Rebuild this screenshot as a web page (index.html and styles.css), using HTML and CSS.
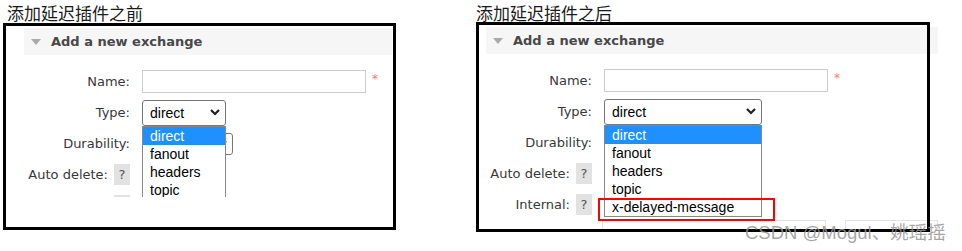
FILE: index.html
```html
<!DOCTYPE html>
<html lang="zh-CN">
<head>
  <meta charset="UTF-8">
  <title>延迟插件对比</title>
  <link rel="stylesheet" href="styles.css">
</head>
<body>

  <div class="page">

    <!-- Before the plugin -->
    <div class="panel panel-before">
      <div class="caption">添加延迟插件之前</div>
      <div class="frame">
        <div class="shot">
          <div class="section-head">
            <svg class="toggle" width="10" height="6" viewBox="0 0 10 6"><polygon points="0,0 10,0 5,6" fill="#aaa"/></svg>
            <h2>Add a new exchange</h2>
          </div>
          <div class="form">
            <div class="row">
              <div class="label">Name:</div>
              <div class="value"><div class="input"></div><span class="req">*</span></div>
            </div>
            <div class="row">
              <div class="label">Type:</div>
              <div class="value">
                <div class="select type-before">
                  <span>direct</span>
                  <svg width="10" height="7" viewBox="0 0 10 7"><polyline points="1,1 5,5 9,1" fill="none" stroke="#222" stroke-width="2.2"/></svg>
                  <div class="dropdown">
                    <div class="option active">direct</div>
                    <div class="option">fanout</div>
                    <div class="option">headers</div>
                    <div class="option">topic</div>
                  </div>
                </div>
              </div>
            </div>
            <div class="row">
              <div class="label">Durability:</div>
              <div class="value">
                <div class="select small">
                  <span></span>
                  <svg width="10" height="7" viewBox="0 0 10 7"><polyline points="1,1 5,5 9,1" fill="none" stroke="#222" stroke-width="2.2"/></svg>
                </div>
              </div>
            </div>
            <div class="row">
              <div class="label">Auto delete: <span class="help">?</span></div>
              <div class="value"></div>
            </div>
            <!-- next row is cut by the screenshot edge -->
            <div class="row">
              <div class="label"><span class="help"></span></div>
              <div class="value"></div>
            </div>
          </div>
        </div>
      </div>
    </div>

    <!-- After the plugin -->
    <div class="panel panel-after">
      <div class="caption">添加延迟插件之后</div>
      <div class="frame">
        <div class="shot">
          <div class="section-head">
            <svg class="toggle" width="10" height="6" viewBox="0 0 10 6"><polygon points="0,0 10,0 5,6" fill="#aaa"/></svg>
            <h2>Add a new exchange</h2>
          </div>
          <div class="form">
            <div class="row">
              <div class="label">Name:</div>
              <div class="value"><div class="input"></div><span class="req">*</span></div>
            </div>
            <div class="row">
              <div class="label">Type:</div>
              <div class="value">
                <div class="select type-after">
                  <span>direct</span>
                  <svg width="10" height="7" viewBox="0 0 10 7"><polyline points="1,1 5,5 9,1" fill="none" stroke="#222" stroke-width="2.2"/></svg>
                  <div class="dropdown">
                    <div class="option active">direct</div>
                    <div class="option">fanout</div>
                    <div class="option">headers</div>
                    <div class="option">topic</div>
                    <div class="option marked">x-delayed-message</div>
                  </div>
                </div>
              </div>
            </div>
            <div class="row">
              <div class="label">Durability:</div>
              <div class="value">
                <div class="select small">
                  <span></span>
                  <svg width="10" height="7" viewBox="0 0 10 7"><polyline points="1,1 5,5 9,1" fill="none" stroke="#222" stroke-width="2.2"/></svg>
                </div>
              </div>
            </div>
            <div class="row">
              <div class="label">Auto delete: <span class="help">?</span></div>
              <div class="value"></div>
            </div>
            <div class="row">
              <div class="label">Internal: <span class="help">?</span></div>
              <div class="value"></div>
            </div>
            <div class="row row-top">
              <div class="label"></div>
              <div class="value"><div class="input faint"></div><div class="input faint short"></div></div>
            </div>
          </div>
        </div>
      </div>
      <div class="watermark">CSDN @Mogul、姚瑶摇</div>
    </div>

  </div>

</body>
</html>
```

FILE: styles.css
```css
* {
  box-sizing: border-box;
  margin: 0;
  padding: 0;
}

html,
body {
  height: 100%;
}

body {
  min-height: 251px;
  background-color: #fff;
  font-family: "DejaVu Sans", Verdana, sans-serif;
  font-size: 13px;
  color: #383838;
}

.page {
  display: flex;
  gap: 80px;
  padding-left: 3px;
}

.panel {
  position: relative;
}

/* Chinese titles above each picture */
.caption {
  height: 22px;
  padding-top: 3px;
  line-height: 19px;
  font-family: "Noto Sans CJK SC", "Microsoft YaHei", sans-serif;
  font-size: 17px;
  color: #1a1a1a;
}

.panel-before .caption {
  padding-left: 4px;
}

/* Black frame drawn on top of the pasted screenshot */
.frame {
  position: relative;
  padding: 5px 0 0 21px;
}

.frame::after {
  content: "";
  position: absolute;
  top: 0;
  left: 0;
  right: 0;
  bottom: 0;
  border: 3px solid #000;
  pointer-events: none;
}

.panel-before .frame {
  width: 393px;
  height: 207px;
  margin-top: 1px;
}

.panel-after .frame {
  width: 454px;
  height: 210px;
  padding-left: 10px;
}

.shot {
  overflow: hidden;
  background-color: #fff;
}

.panel-before .shot {
  width: 368px;
  height: 169px;
}

.panel-after .shot {
  width: 452px;
  height: 202px;
}

/* Section header */
.section-head {
  display: flex;
  align-items: center;
  gap: 10px;
  height: 27px;
  padding-left: 7px;
  background-color: #f6f6f6;
}

.section-head h2 {
  font-size: 13px;
  font-weight: bold;
  color: #484848;
}

/* Form rows */
.form {
  padding-top: 11px;
}

.row {
  display: flex;
  align-items: center;
  height: 31px;
}

.row-top {
  align-items: flex-start;
}

.label {
  width: 106px;
  display: flex;
  justify-content: flex-end;
  align-items: center;
  gap: 6px;
  white-space: nowrap;
}

.value {
  display: flex;
  align-items: center;
  margin-left: 12px;
}

.row-top .value {
  gap: 19px;
}

.input {
  width: 224px;
  height: 23px;
  border: 1px solid #ccc;
  background-color: #fff;
}

.input.faint {
  border-color: #e2e2e2;
}

.input.short {
  width: 93px;
}

.req {
  margin-left: 6px;
  margin-top: -6px;
  font-size: 12px;
  color: #f77;
}

.help {
  display: inline-block;
  width: 16px;
  height: 21px;
  line-height: 21px;
  text-align: center;
  background-color: #e2e2e2;
  color: #555;
  font-size: 13px;
}

/* Select boxes */
.select {
  position: relative;
  display: flex;
  align-items: center;
  justify-content: space-between;
  height: 26px;
  padding: 0 5px 0 7px;
  border: 1px solid #767676;
  border-radius: 3px;
  background-color: #fff;
  font-family: "Liberation Sans", Arial, sans-serif;
  font-size: 14px;
  color: #000;
}

.select.type-before {
  width: 84px;
}

.select.type-after {
  width: 158px;
}

.select.small {
  width: 91px;
  height: 22px;
}

/* Open options list */
.dropdown {
  position: absolute;
  top: calc(100% + 1px);
  left: -1px;
  right: -1px;
  z-index: 2;
  border: 1px solid #888;
  background-color: #fff;
}

.option {
  height: 18px;
  line-height: 18px;
  padding-left: 7px;
  white-space: nowrap;
}

.option.active {
  background-color: #1e90ff;
  color: #fff;
}

.option.marked {
  position: relative;
}

.option.marked::after {
  content: "";
  position: absolute;
  top: 0;
  left: -7px;
  right: -14px;
  bottom: -5px;
  border: 2px solid #f00;
}

.watermark {
  position: absolute;
  left: 269px;
  top: 222px;
  line-height: 22px;
  font-family: "Liberation Sans", "Noto Sans CJK SC", sans-serif;
  font-size: 18.5px;
  color: rgba(150, 150, 150, 0.85);
  white-space: nowrap;
}
```
